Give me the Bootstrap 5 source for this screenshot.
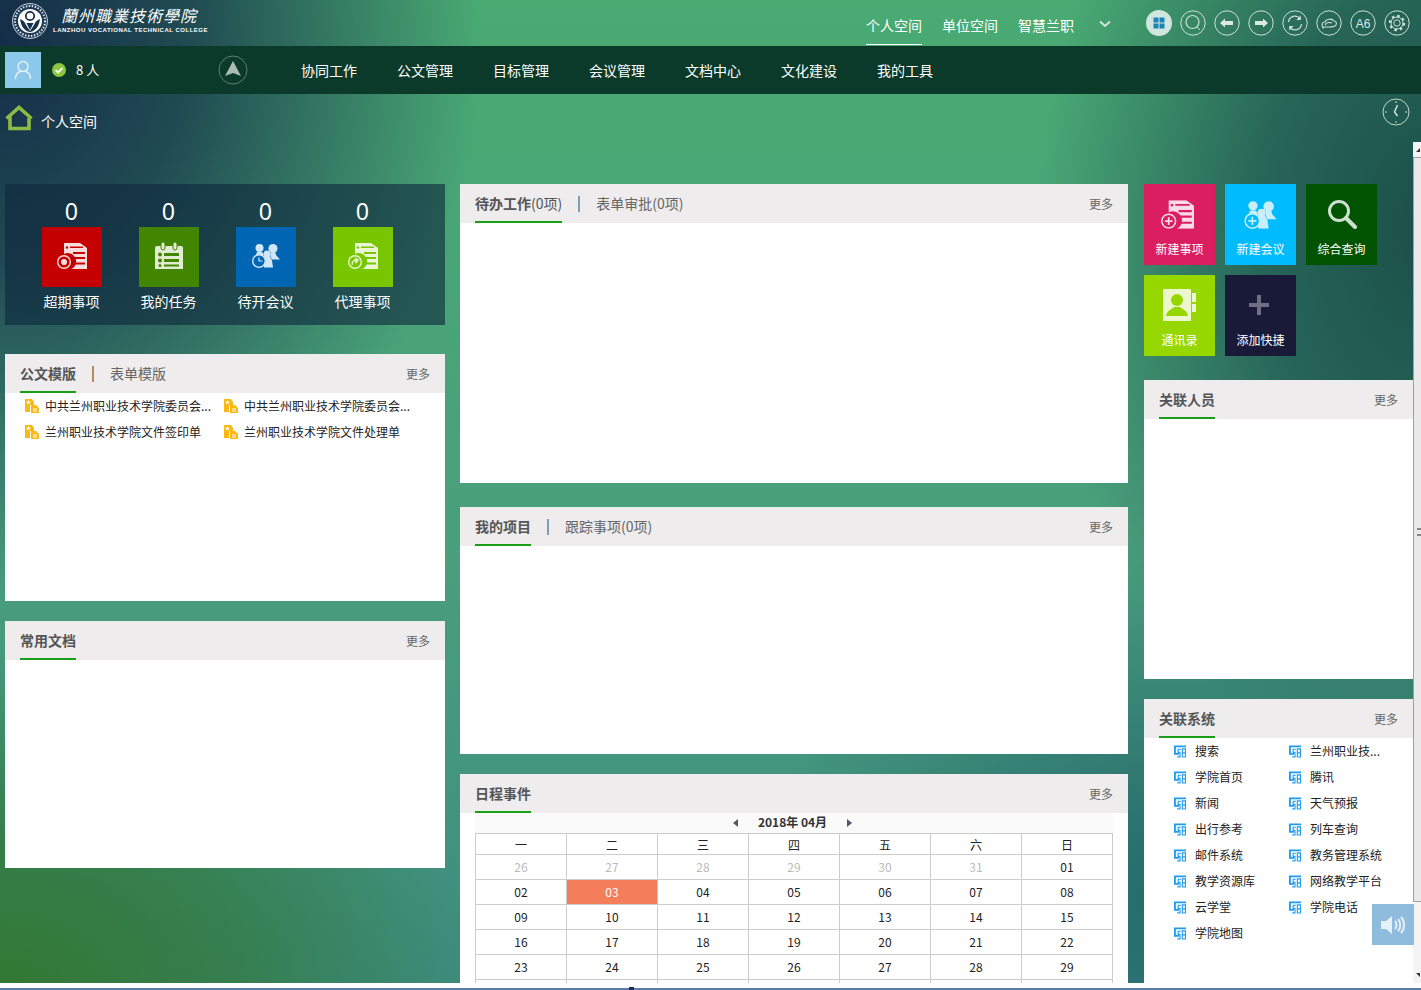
<!doctype html>
<html lang="zh"><head><meta charset="utf-8"><title>个人空间</title>
<link rel="stylesheet" href="https://cdn.jsdelivr.net/npm/bootstrap@5.3.0/dist/css/bootstrap.min.css">
<style>
html,body{height:990px;overflow:hidden;}
body{width:1421px;font-family:"Noto Sans CJK SC","Liberation Sans",sans-serif;font-size:13px;color:#222;
background:
radial-gradient(480px 560px at 0 40px,rgba(20,44,72,1) 0,rgba(22,52,74,.8) 40%,rgba(22,60,70,0) 100%),
radial-gradient(400px 560px at 1440px 230px,rgba(26,78,72,1) 0,rgba(30,85,80,.8) 45%,rgba(30,85,80,0) 100%),
radial-gradient(480px 340px at 0 990px,rgba(50,120,50,1) 0,rgba(50,120,60,.7) 50%,rgba(50,120,60,0) 100%),
radial-gradient(420px 350px at 1180px 900px,rgba(35,100,105,.9) 0,rgba(35,100,105,0) 100%),
linear-gradient(180deg,#49aa72 0,#4a9f7c 55%,#3d8c80 100%);}
.top-bar{height:46px;}
.crest{width:36px;height:36px;margin:3px 0 0 12px;}
.brand-cn{font-family:"Noto Sans CJK TC",sans-serif;font-size:16px;line-height:22px;font-style:italic;color:#fff;letter-spacing:1px;margin-top:4px;padding-left:13px;white-space:nowrap;}
.brand-en{font-family:"Liberation Sans",sans-serif;font-weight:700;font-size:6px;line-height:9px;letter-spacing:.5px;color:#fff;margin-left:5px;white-space:nowrap;}
.top-tab{color:#fff;font-size:14px;line-height:50px;height:45px;text-decoration:none;margin-right:20px;}
.top-tab.on{border-bottom:1px solid #fff;}
.top-chev{width:12px;height:8px;margin:2px 35px 0 5px;}
.ring-row{margin-right:11px;}
.ring{width:26px;height:26px;margin-right:8px;flex:none;display:block;}
.nav-strip{height:48px;background:#0b3a2b;}
.avatar-box{width:36px;height:36px;background:#8cc8e9;margin-left:5px;}
.online{color:#fff;font-size:13px;margin-left:11px;width:166px;}
.online svg{margin-right:10px;}
.nav-pin{width:30px;height:30px;margin-right:53px;}
.nav-entry{color:#fff;font-size:14px;text-decoration:none;width:96px;flex:none;white-space:nowrap;}
.crumb-row{height:48px;color:#fff;font-size:14px;padding:11px 8px 0 5px;}
.crumb-row span{margin-left:8px;line-height:32px;}
.clock{width:28px;height:28px;margin-top:-7px;margin-right:3px;}
.stage{height:841px;overflow:hidden;padding-top:42px;position:relative;}
.lane{flex:none;}
.lane-a{width:440px;margin-left:5px;margin-right:15px;}
.lane-b{width:668px;margin-right:16px;}
.lane-c{width:269px;}
.sheet{background:#fff;}
.sheet-head{height:39px;background:#eeeced;padding:0 15px;color:#666;}
.sheet-tab{height:39px;line-height:39px;font-size:14px;color:#666;white-space:nowrap;}
.sheet-tab.on{font-weight:700;border-bottom:2px solid #1a9e1a;color:#555;}
.sheet-tab .thin{font-weight:400;}
.tab-sep{width:2px;height:16px;background:#7f9db5;margin:0 16px;}
.tab-sep.warm{background:#b98a60;}
.sheet-more{font-size:12px;color:#666;text-decoration:none;}
.h-247{height:247px;}.h-299{height:299px;}.h-300{height:300px;}
.gap-29{margin-top:29px;}.gap-20{margin-top:20px;}.gap-24{margin-top:24px;}
.stats{height:141px;background:rgba(14,40,62,.62);padding-top:13px;padding-left:36.500px;gap:37px;}
.stat{width:60px;text-align:center;color:#fff;}
.stat-num{font-size:23px;line-height:30px;font-family:"Liberation Sans",sans-serif;}
.stat-ico{width:60px;height:60px;}
.stat-ico svg{margin-bottom:3px;}
.stat-lab{font-size:14px;line-height:18px;margin:5px -10px 0;white-space:nowrap;}
.bg-red{background:#c40000;}.bg-leaf{background:#428500;}.bg-sky{background:#0066b4;}.bg-lime{background:#78c600;}
.tile-grid{gap:10px;width:269px;}
.tile{width:71px;height:81px;color:#fff;font-size:12px;line-height:18px;text-align:center;flex:none;padding-top:12px;}
.tile-art{height:36px;margin-bottom:8px;}
.tile-a .tile-art svg{margin-right:4px;}
.tile-e .tile-art svg{margin-right:3px;}
.tile-a{background:#db1e60;}.tile-b{background:#00bcff;}.tile-c{background:#005300;}.tile-d{background:#97d700;}.tile-e{background:#181a38;}
.file-list{padding:0 0 0 20px;}
.file-item{width:199px;height:26px;font-size:12px;color:#222;white-space:nowrap;}
.file-item svg{margin-right:6px;flex:none;}
.sys-list{padding:0 0 0 30px;}
.sys-item{width:115px;height:26px;font-size:12px;color:#222;white-space:nowrap;}
.sys-item svg{margin-right:9px;flex:none;}
.cal{padding:0 15px;height:300px;}
.cal-bar{height:20px;background:#fafafa;font-size:12px;line-height:16px;font-weight:700;color:#333;gap:20px;padding-right:3px;}
.cal-bar span{margin-top:-2px;}
.cal-bar i{display:block;width:0;height:0;border-top:4px solid transparent;border-bottom:4px solid transparent;}
.cal-prev{border-right:5px solid #4a5a6a;}.cal-next{border-left:5px solid #4a5a6a;}
.cal-grid{table-layout:fixed;width:638px;border-collapse:collapse;font-size:12px;color:#222;text-align:center;}
.cal-grid td,.cal-grid th{border:1px solid #ccc;height:25px;padding:0;font-weight:400;line-height:16px;}
.cal-grid th{height:21px;padding-top:2px;}
.cal-grid .dim{color:#bbb;}
.cal-grid .now{background:#f47e5a;color:#fff;}
.sound{width:42px;height:41px;background:#8fbcdc;position:absolute;left:1372px;top:762px;}
.rail{width:8px;position:absolute;left:1413px;top:0;height:841px;background:#f4f4f4;}
.rail-up{position:absolute;left:3px;top:6px;width:0;height:0;border-left:4px solid transparent;border-bottom:4px solid #333;}
.rail-down{position:absolute;left:3px;bottom:6px;width:0;height:0;border-left:4px solid transparent;border-top:4px solid #333;}
.rail-thumb{position:absolute;left:0;right:0;top:15px;height:745px;background:#e9e9e9;border-left:1px solid #a0a0a0;border-top:1px solid #a0a0a0;border-bottom:1px solid #a0a0a0;}
.rail-grip{position:absolute;left:3px;right:0;top:370px;height:8px;border-top:2px solid #888;border-bottom:2px solid #888;}
.foot-strip{height:5px;background:#fff;position:relative;}
.foot-base{height:2px;background:#5d7ba8;}
.foot-dot{position:absolute;left:629px;bottom:-2px;width:5px;height:3px;background:#1c2f55;}
</style></head>
<body>
<svg width="0" height="0" class="d-none" aria-hidden="true">
<symbol id="doc" viewBox="0 0 30 26"><path d="M7 0h16l7 5v21H14.500A8 8 0 0 0 7 11z" fill="currentColor"/><circle cx="10" cy="4.500" r="1.200" fill="var(--c)"/><path d="M13 3.500h13v1.500H13zM16 9h12v2H16zM16 14h12v2H16zM16 19.500h12v2H16z" fill="var(--c)"/><circle cx="7" cy="19" r="6.300" fill="var(--c)" stroke="currentColor" stroke-width="1.400"/></symbol>
<symbol id="people" viewBox="0 0 28 25"><circle cx="7.500" cy="5" r="4" fill="currentColor"/><path d="M5 9h5l2 3-4 2-5 1z" fill="currentColor"/><circle cx="21" cy="5.500" r="4.500" fill="currentColor"/><path d="M18.500 9.500h5l.5 2.500 4 4.500H20l-1.500-3z" fill="currentColor"/><circle cx="15" cy="11" r="3.500" fill="currentColor"/><path d="M12 13.500h6l2 4 1 7H12z" fill="currentColor"/><circle cx="7" cy="18" r="6.300" fill="var(--c)" stroke="currentColor" stroke-width="1.400"/></symbol>
<symbol id="star-file" viewBox="0 0 14 14"><path d="M0 0h7l2 3v3H5v7H0z" fill="#fdb813"/><path d="M6 6h5l3 3v5H6z" fill="#fdb813"/><path d="M3.500 1l.7 1.500 1.600.2-1.200 1.100.3 1.600-1.400-.8-1.400.8.3-1.600L1.200 2.700l1.600-.2z" fill="#fff"/><path d="M8 9.500h4v1H8zM8 11.500h4v1H8z" fill="#fff"/></symbol>
<symbol id="sys" viewBox="0 0 13 13"><path d="M0 0h13v2H2v6h3.500v2H0z" fill="#1e9bef"/><path d="M3.500 12.300H6.500V7.500H4.500V4h3" fill="none" stroke="#1e9bef" stroke-width="1.200"/><path d="M9 3.600h3.400V12.400H9zM9 8h3.400" fill="none" stroke="#1e9bef" stroke-width="1.200"/></symbol>
</svg>

<header class="top-bar d-flex">
  <svg class="crest flex-none" viewBox="0 0 36 36"><circle cx="18" cy="18" r="17.400" fill="#1c3a55" stroke="#cfd8de" stroke-width="1"/><circle cx="18" cy="18" r="15" fill="none" stroke="#dfe6ea" stroke-width="2" stroke-dasharray="1.500 1.500"/><circle cx="18" cy="18" r="12" fill="#fff"/><path d="M8 16c3 1 5 3 6 6l4 6 4-6c1-3 3-5 6-6-1 7-4 12-10 13-6-1-9-6-10-13z" fill="#16324a"/><circle cx="18" cy="13" r="4.200" fill="none" stroke="#16324a" stroke-width="1.800"/><path d="M14.500 20h7l-3.500 7z" fill="#16324a"/></svg>
  <div class="flex-grow-1">
    <div class="brand-cn">蘭州職業技術學院</div>
    <div class="brand-en">LANZHOU VOCATIONAL TECHNICAL COLLEGE</div>
  </div>
  <nav class="d-flex align-items-start">
    <a class="top-tab on" href="#">个人空间</a><a class="top-tab" href="#">单位空间</a><a class="top-tab" href="#">智慧兰职</a>
    <svg class="top-chev align-self-center" viewBox="0 0 12 8"><path d="M1 1.500l5 4.500 5-4.500" fill="none" stroke="#cfe6da" stroke-width="2"/></svg>
  </nav>
  <div class="d-flex align-items-center ring-row">
    <svg class="ring" viewBox="0 0 26 26"><circle cx="13" cy="13" r="13" fill="#d2e6e0"/><path d="M7.500 7.500h5v5h-5zM13.500 7.500h5v5h-5zM7.500 13.500h5v5h-5zM13.500 13.500h5v5h-5z" fill="#1a86b8"/></svg>
    <svg class="ring" viewBox="0 0 26 26"><g fill="none" stroke="#cfe0d8"><circle cx="13" cy="13" r="12.200"/><circle cx="12.500" cy="12" r="6.500" stroke-width="1.200"/><path d="M17 17l3 3"/></g></svg>
    <svg class="ring" viewBox="0 0 26 26"><circle cx="13" cy="13" r="12.200" fill="none" stroke="#cfe0d8"/><path d="M6 13l5-4.500V11h8v4h-8v2.500z" fill="#dce9e3"/></svg>
    <svg class="ring" viewBox="0 0 26 26"><circle cx="13" cy="13" r="12.200" fill="none" stroke="#cfe0d8"/><path d="M20 13l-5-4.500V11H7v4h8v2.500z" fill="#dce9e3"/></svg>
    <svg class="ring" viewBox="0 0 26 26"><g fill="none" stroke="#cfe0d8"><circle cx="13" cy="13" r="12.200"/><path d="M6.500 12a6.500 6.500 0 0 1 11.500-3.500M19.500 14A6.500 6.500 0 0 1 8 17.500" stroke-width="1.300"/></g><path d="M18.800 5.500v4.500h-4.500zM7.200 20.500V16h4.500z" fill="#cfe0d8"/></svg>
    <svg class="ring" viewBox="0 0 26 26"><g fill="none" stroke="#cfe0d8"><circle cx="13" cy="13" r="12.200"/><path d="M6 15c0-2 2-3 3-3 1-3 7-4 9-1 2 0 3 2 2 4s-4 2-7 2H8l-1 1zM9 15c1-2 4-3 7-2" stroke-width="1.100"/></g></svg>
    <svg class="ring" viewBox="0 0 26 26"><circle cx="13" cy="13" r="12.200" fill="none" stroke="#cfe0d8"/><text x="13" y="17.500" text-anchor="middle" font-size="12" font-family="Liberation Sans,sans-serif" fill="#dce9e3">A6</text></svg>
    <svg class="ring m-0" viewBox="0 0 26 26"><g fill="none" stroke="#cfe0d8"><circle cx="13" cy="13" r="12.200"/><circle cx="13" cy="13" r="3.200"/><circle cx="13" cy="13" r="7" stroke-width="2.400" stroke-dasharray="2.500 3"/><circle cx="13" cy="13" r="6"/></g></svg>
  </div>
</header>

<div class="nav-strip d-flex align-items-center">
  <div class="avatar-box d-flex align-items-center justify-content-center">
    <svg width="18" height="20" viewBox="0 0 18 20" fill="none" stroke="#eaf5fb" stroke-width="1.300"><circle cx="9" cy="6.500" r="5"/><path d="M1.500 19c0-5 3-7 5-7.500M16.500 19c0-5-3-7-5-7.500"/></svg>
  </div>
  <div class="online d-flex align-items-center">
    <svg width="14" height="14" viewBox="0 0 14 14"><circle cx="7" cy="7" r="7" fill="#8dc63f"/><path d="M3.500 7l2.500 2.500 4.500-4.500" fill="none" stroke="#fff" stroke-width="1.800"/></svg>8 人
  </div>
  <svg class="nav-pin" viewBox="0 0 30 30"><circle cx="15" cy="15" r="14" fill="none" stroke="#5f7f72"/><path d="M15 6l8 15-8-3-8 3z" fill="#a9bdb5"/></svg>
  <a class="nav-entry" href="#">协同工作</a><a class="nav-entry" href="#">公文管理</a><a class="nav-entry" href="#">目标管理</a><a class="nav-entry" href="#">会议管理</a><a class="nav-entry" href="#">文档中心</a><a class="nav-entry" href="#">文化建设</a><a class="nav-entry" href="#">我的工具</a>
</div>

<div class="crumb-row d-flex align-items-start">
  <svg width="28" height="26" viewBox="0 0 28 26" fill="none" stroke="#8dbb46" stroke-width="3.600"><path d="M1.500 13.500L14 2.500l12.500 11"/><path d="M5 11.500V23.500H24V13"/></svg>
  <span>个人空间</span>
  <svg class="clock ms-auto" viewBox="0 0 28 28"><g fill="none" stroke="#c4d4cc"><circle cx="14" cy="14" r="13"/><path d="M15.500 7l-3 7 3 4" stroke="#e4eee9" stroke-width="1.300"/><path d="M14 3v2M14 23v2M3 14h2M23 14h2"/></g></svg>
</div>

<main class="stage d-flex align-items-start">
  <section class="lane lane-a">
    <div class="stats d-flex">
      <div class="stat"><div class="stat-num">0</div><div class="stat-ico bg-red d-flex align-items-center justify-content-center" style="--c:#c40000;color:#fbdcdc"><svg width="30" height="26"><use href="#doc"/><circle cx="7" cy="19" r="3" fill="#fbdcdc"/></svg></div><div class="stat-lab">超期事项</div></div>
      <div class="stat"><div class="stat-num">0</div><div class="stat-ico bg-leaf d-flex align-items-center justify-content-center"><svg width="28" height="27" viewBox="0 0 28 27"><path d="M2 4h24a2 2 0 0 1 2 2v21H0V6a2 2 0 0 1 2-2z" fill="#e2ecd2"/><rect x="6" y="0" width="4" height="8" rx="2" fill="#e2ecd2" stroke="#428500"/><rect x="18" y="0" width="4" height="8" rx="2" fill="#e2ecd2" stroke="#428500"/><path d="M9 11h15v3H9zM9 17h15v3H9zM9 22.500h15v2H9z" fill="#428500"/><circle cx="5" cy="12.500" r="2" fill="#428500"/><circle cx="5" cy="18.500" r="2" fill="#428500"/><circle cx="5" cy="23.500" r="1.500" fill="#428500"/></svg></div><div class="stat-lab">我的任务</div></div>
      <div class="stat"><div class="stat-num">0</div><div class="stat-ico bg-sky d-flex align-items-center justify-content-center" style="--c:#0066b4;color:#d3e6f6"><svg width="28" height="25"><use href="#people"/><path d="M7 14.500V18h3.500" fill="none" stroke="#d3e6f6" stroke-width="1.200"/></svg></div><div class="stat-lab">待开会议</div></div>
      <div class="stat"><div class="stat-num">0</div><div class="stat-ico bg-lime d-flex align-items-center justify-content-center" style="--c:#78c600;color:#eaf6d3"><svg width="30" height="26"><use href="#doc"/><path d="M4 22c0-3 2-5 5-5M7.500 15.500L10.500 17 8 19.500z" fill="none" stroke="#eaf6d3" stroke-width="1.300"/></svg></div><div class="stat-lab">代理事项</div></div>
    </div>
    <div class="sheet h-247 gap-29">
      <div class="sheet-head d-flex align-items-center"><div class="sheet-tab on">公文模版</div><div class="tab-sep warm"></div><div class="sheet-tab">表单模版</div><a class="sheet-more ms-auto" href="#">更多</a></div>
      <div class="file-list d-flex flex-wrap">
        <div class="file-item d-flex align-items-center"><svg width="14" height="14"><use href="#star-file"/></svg>中共兰州职业技术学院委员会...</div>
        <div class="file-item d-flex align-items-center"><svg width="14" height="14"><use href="#star-file"/></svg>中共兰州职业技术学院委员会...</div>
        <div class="file-item d-flex align-items-center"><svg width="14" height="14"><use href="#star-file"/></svg>兰州职业技术学院文件签印单</div>
        <div class="file-item d-flex align-items-center"><svg width="14" height="14"><use href="#star-file"/></svg>兰州职业技术学院文件处理单</div>
      </div>
    </div>
    <div class="sheet h-247 gap-20">
      <div class="sheet-head d-flex align-items-center"><div class="sheet-tab on">常用文档</div><a class="sheet-more ms-auto" href="#">更多</a></div>
    </div>
  </section>

  <section class="lane lane-b">
    <div class="sheet h-299">
      <div class="sheet-head d-flex align-items-center"><div class="sheet-tab on">待办工作<span class="thin">(0项)</span></div><div class="tab-sep"></div><div class="sheet-tab">表单审批(0项)</div><a class="sheet-more ms-auto" href="#">更多</a></div>
    </div>
    <div class="sheet h-247 gap-24">
      <div class="sheet-head d-flex align-items-center"><div class="sheet-tab on">我的项目</div><div class="tab-sep"></div><div class="sheet-tab">跟踪事项(0项)</div><a class="sheet-more ms-auto" href="#">更多</a></div>
    </div>
    <div class="sheet gap-20">
      <div class="sheet-head d-flex align-items-center"><div class="sheet-tab on">日程事件</div><a class="sheet-more ms-auto" href="#">更多</a></div>
      <div class="cal">
        <div class="cal-bar d-flex align-items-center justify-content-center"><i class="cal-prev"></i><span>2018年 04月</span><i class="cal-next"></i></div>
        <table class="cal-grid">
          <tr><th>一</th><th>二</th><th>三</th><th>四</th><th>五</th><th>六</th><th>日</th></tr>
          <tr><td class="dim">26</td><td class="dim">27</td><td class="dim">28</td><td class="dim">29</td><td class="dim">30</td><td class="dim">31</td><td>01</td></tr>
          <tr><td>02</td><td class="now">03</td><td>04</td><td>05</td><td>06</td><td>07</td><td>08</td></tr>
          <tr><td>09</td><td>10</td><td>11</td><td>12</td><td>13</td><td>14</td><td>15</td></tr>
          <tr><td>16</td><td>17</td><td>18</td><td>19</td><td>20</td><td>21</td><td>22</td></tr>
          <tr><td>23</td><td>24</td><td>25</td><td>26</td><td>27</td><td>28</td><td>29</td></tr>
          <tr><td></td><td></td><td></td><td></td><td></td><td></td><td></td></tr>
        </table>
      </div>
    </div>
  </section>

  <section class="lane lane-c">
    <div class="tile-grid d-flex flex-wrap">
      <div class="tile tile-a" style="--c:#db1e60;color:#fff"><div class="tile-art d-flex align-items-center justify-content-center" style="color:#fbdbe6"><svg width="33" height="29" viewBox="0 0 30 26"><use href="#doc" width="30" height="26"/><path d="M3.500 19h7M7 15.500v7" stroke="#fbdbe6" stroke-width="1.600"/></svg></div>新建事项</div>
      <div class="tile tile-b" style="--c:#00bcff"><div class="tile-art d-flex align-items-center justify-content-center" style="color:#c9effd"><svg width="33" height="29" viewBox="0 0 28 25"><use href="#people" width="28" height="25"/><path d="M3.500 18h7M7 14.500v7" stroke="#c9effd" stroke-width="1.500"/></svg></div>新建会议</div>
      <div class="tile tile-c"><div class="tile-art d-flex align-items-center justify-content-center"><svg width="30" height="30" viewBox="0 0 30 30"><circle cx="12" cy="12" r="9.500" fill="none" stroke="#cfe0cf" stroke-width="3"/><path d="M19 19l9 9" stroke="#cfe0cf" stroke-width="4" stroke-linecap="round"/></svg></div>综合查询</div>
      <div class="tile tile-d"><div class="tile-art d-flex align-items-center justify-content-center"><svg width="33" height="32" viewBox="0 0 33 32"><path d="M1 0h26a2 2 0 0 1 1 2v30H1a1 1 0 0 1-1-1V1z" fill="#ecf7cf"/><path d="M29 4h4v9h-4zM29 15h4v8h-4z" fill="#ecf7cf"/><circle cx="14" cy="11" r="6" fill="#97d700"/><path d="M3 27c1-6 5-6 8-9h6c3 3 7 3 8 9z" fill="#97d700"/></svg></div>通讯录</div>
      <div class="tile tile-e"><div class="tile-art d-flex align-items-center justify-content-center"><svg width="20" height="20" viewBox="0 0 20 20"><path d="M8 0h4v8h8v4h-8v8H8v-8H0V8h8z" fill="#6e6f82"/></svg></div>添加快捷</div>
    </div>
    <div class="sheet h-299 gap-24">
      <div class="sheet-head d-flex align-items-center"><div class="sheet-tab on">关联人员</div><a class="sheet-more ms-auto" href="#">更多</a></div>
    </div>
    <div class="sheet h-300 gap-20">
      <div class="sheet-head d-flex align-items-center"><div class="sheet-tab on">关联系统</div><a class="sheet-more ms-auto" href="#">更多</a></div>
      <div class="sys-list d-flex flex-wrap">
        <div class="sys-item d-flex align-items-center"><svg width="12" height="13"><use href="#sys"/></svg>搜索</div>
        <div class="sys-item d-flex align-items-center"><svg width="12" height="13"><use href="#sys"/></svg>兰州职业技...</div>
        <div class="sys-item d-flex align-items-center"><svg width="12" height="13"><use href="#sys"/></svg>学院首页</div>
        <div class="sys-item d-flex align-items-center"><svg width="12" height="13"><use href="#sys"/></svg>腾讯</div>
        <div class="sys-item d-flex align-items-center"><svg width="12" height="13"><use href="#sys"/></svg>新闻</div>
        <div class="sys-item d-flex align-items-center"><svg width="12" height="13"><use href="#sys"/></svg>天气预报</div>
        <div class="sys-item d-flex align-items-center"><svg width="12" height="13"><use href="#sys"/></svg>出行参考</div>
        <div class="sys-item d-flex align-items-center"><svg width="12" height="13"><use href="#sys"/></svg>列车查询</div>
        <div class="sys-item d-flex align-items-center"><svg width="12" height="13"><use href="#sys"/></svg>邮件系统</div>
        <div class="sys-item d-flex align-items-center"><svg width="12" height="13"><use href="#sys"/></svg>教务管理系统</div>
        <div class="sys-item d-flex align-items-center"><svg width="12" height="13"><use href="#sys"/></svg>教学资源库</div>
        <div class="sys-item d-flex align-items-center"><svg width="12" height="13"><use href="#sys"/></svg>网络教学平台</div>
        <div class="sys-item d-flex align-items-center"><svg width="12" height="13"><use href="#sys"/></svg>云学堂</div>
        <div class="sys-item d-flex align-items-center"><svg width="12" height="13"><use href="#sys"/></svg>学院电话</div>
        <div class="sys-item d-flex align-items-center"><svg width="12" height="13"><use href="#sys"/></svg>学院地图</div>
      </div>
    </div>
  </section>
  <div class="rail"><span class="rail-up"></span><div class="rail-thumb"><div class="rail-grip"></div></div><span class="rail-down"></span></div>
  <div class="sound d-flex align-items-center justify-content-center"><svg width="26" height="20" viewBox="0 0 26 20" fill="none" stroke="#e6f0f7" stroke-width="2"><path d="M1 6h5l6-5v18l-6-5H1z" fill="#e6f0f7" stroke="none"/><path d="M15 6c2 2 2 6 0 8M18 4c3 3 3 9 0 12M21 2c4 4 4 12 0 16"/></svg></div>
</main>
<div class="foot-strip"><span class="foot-dot"></span></div>
<div class="foot-base"></div>
</body></html>
